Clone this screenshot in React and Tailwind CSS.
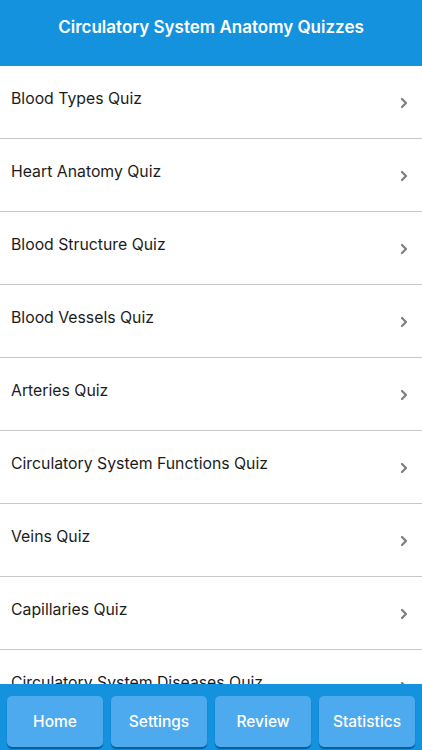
import React from "react";

const quizzes = [
  "Blood Types Quiz",
  "Heart Anatomy Quiz",
  "Blood Structure Quiz",
  "Blood Vessels Quiz",
  "Arteries Quiz",
  "Circulatory System Functions Quiz",
  "Veins Quiz",
  "Capillaries Quiz",
  "Circulatory System Diseases Quiz",
  "Heart Conditions Quiz",
];

const tabs = ["Home", "Settings", "Review", "Statistics"];

const Chevron = () => (
  <svg width="8" height="12" viewBox="0 0 8 12" fill="none">
    <path
      d="M2 2l4 4-4 4"
      stroke="#7d7d7d"
      strokeWidth="2.2"
      strokeLinecap="round"
      strokeLinejoin="round"
    />
  </svg>
);

const App = () => {
  return (
    <div
      className="h-[750px] w-full flex flex-col bg-white overflow-hidden"
      style={{ fontFamily: "Inter, 'Liberation Sans', sans-serif" }}
    >
      <div className="h-[66px] shrink-0 bg-[#1592de] flex justify-center pt-[16px]">
        <p className="text-white text-[17px] font-semibold leading-[22px]">
          Circulatory System Anatomy Quizzes
        </p>
      </div>

      <div className="flex-1 overflow-hidden">
        {quizzes.map((q) => (
          <div
            key={q}
            className="h-[73px] flex items-center justify-between border-b-[1.5px] border-[#c8c8c8] pl-[11px] pr-[14px]"
          >
            <span className="text-[15.8px] text-[#1c1c1c] mb-[6px] whitespace-nowrap">{q}</span>
            <span className="mt-[2px]">
              <Chevron />
            </span>
          </div>
        ))}
      </div>

      <div className="h-[66px] shrink-0 bg-[#1592de] grid grid-cols-4 gap-[8px] px-[7px] pt-[12px] pb-[3px]">
        {tabs.map((t) => (
          <button
            key={t}
            className="bg-[#4eaaef] rounded-[5px] shadow-[0_2px_1px_#0a5f9c] text-white text-[15.5px] font-medium"
          >
            {t}
          </button>
        ))}
      </div>
    </div>
  );
};

export default App;
